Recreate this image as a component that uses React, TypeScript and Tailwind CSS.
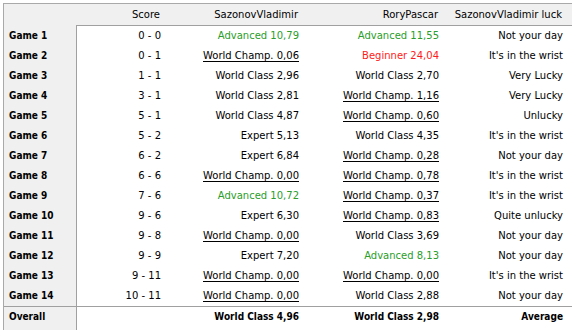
import React from "react";

// Match statistics grid — one row per game, an "Overall" footer.
type Cell = { text: string; tone?: "green" | "red" | "champ" | "plain" };
type GameRow = { label: string; score: string; a: Cell; b: Cell; luck: string };

const p = (text: string): Cell => ({ text, tone: "plain" });
const g = (text: string): Cell => ({ text, tone: "green" });
const r = (text: string): Cell => ({ text, tone: "red" });
const c = (text: string): Cell => ({ text, tone: "champ" });

const ROWS: GameRow[] = [
  { label: "Game 1", score: "0 - 0", a: g("Advanced 10,79"), b: g("Advanced 11,55"), luck: "Not your day" },
  { label: "Game 2", score: "0 - 1", a: c("World Champ. 0,06"), b: r("Beginner 24,04"), luck: "It's in the wrist" },
  { label: "Game 3", score: "1 - 1", a: p("World Class 2,96"), b: p("World Class 2,70"), luck: "Very Lucky" },
  { label: "Game 4", score: "3 - 1", a: p("World Class 2,81"), b: c("World Champ. 1,16"), luck: "Very Lucky" },
  { label: "Game 5", score: "5 - 1", a: p("World Class 4,87"), b: c("World Champ. 0,60"), luck: "Unlucky" },
  { label: "Game 6", score: "5 - 2", a: p("Expert 5,13"), b: p("World Class 4,35"), luck: "It's in the wrist" },
  { label: "Game 7", score: "6 - 2", a: p("Expert 6,84"), b: c("World Champ. 0,28"), luck: "Not your day" },
  { label: "Game 8", score: "6 - 6", a: c("World Champ. 0,00"), b: c("World Champ. 0,78"), luck: "It's in the wrist" },
  { label: "Game 9", score: "7 - 6", a: g("Advanced 10,72"), b: c("World Champ. 0,37"), luck: "It's in the wrist" },
  { label: "Game 10", score: "9 - 6", a: p("Expert 6,30"), b: c("World Champ. 0,83"), luck: "Quite unlucky" },
  { label: "Game 11", score: "9 - 8", a: c("World Champ. 0,00"), b: p("World Class 3,69"), luck: "Not your day" },
  { label: "Game 12", score: "9 - 9", a: p("Expert 7,20"), b: g("Advanced 8,13"), luck: "Not your day" },
  { label: "Game 13", score: "9 - 11", a: c("World Champ. 0,00"), b: c("World Champ. 0,00"), luck: "It's in the wrist" },
  { label: "Game 14", score: "10 - 11", a: c("World Champ. 0,00"), b: p("World Class 2,88"), luck: "Not your day" },
];

const BOLD = "font-['DejaVu_Sans_Condensed','DejaVu_Sans',sans-serif] font-bold [font-stretch:condensed]";

function Rating({ cell }: { cell: Cell }) {
  if (cell.tone === "green") return <span className="text-[#2a9d2a]">{cell.text}</span>;
  if (cell.tone === "red") return <span className="text-[#ff1a1a]">{cell.text}</span>;
  if (cell.tone === "champ") return <span className="underline underline-offset-[2px]">{cell.text}</span>;
  return <span>{cell.text}</span>;
}

function Cells({ score, a, b, luck }: { score: React.ReactNode; a: React.ReactNode; b: React.ReactNode; luck: React.ReactNode }) {
  return (
    <>
      <div className="w-[89px] pr-[5px] text-right whitespace-nowrap">{score}</div>
      <div className="w-[138px] pr-[5px] text-right whitespace-nowrap">{a}</div>
      <div className="w-[140px] pr-[5px] text-right whitespace-nowrap">{b}</div>
      <div className="w-[124px] pr-[5px] text-right whitespace-nowrap">{luck}</div>
    </>
  );
}

export default function App() {
  return (
    <div className="w-[572px] h-[330px] bg-white pt-[3px] pl-[3px] overflow-hidden text-[10px] text-black font-['DejaVu_Sans',sans-serif] leading-none">
      <div className="h-full border-t border-l border-[#a9a9a9] bg-[#f0f0f0]">
        {/* Header */}
        <div className="flex h-[22px]">
          <div className="w-[72px] shrink-0" />
          <div className="flex flex-1 items-center border-b border-[#a0a0a0]">
            <Cells score="Score" a="SazonovVladimir" b="RoryPascar" luck="SazonovVladimir luck" />
          </div>
        </div>

        {ROWS.map((row) => (
          <div key={row.label} className="flex h-[20px]">
            <div className={`w-[72px] shrink-0 pl-[5px] flex items-center ${BOLD}`}>{row.label}</div>
            <div className="flex flex-1 items-center bg-white border-l border-[#a0a0a0]">
              <Cells score={row.score} a={<Rating cell={row.a} />} b={<Rating cell={row.b} />} luck={row.luck} />
            </div>
          </div>
        ))}

        {/* Overall */}
        <div className="flex h-[30px] border-t border-[#a0a0a0]">
          <div className={`w-[72px] shrink-0 pl-[5px] pt-[5px] ${BOLD}`}>Overall</div>
          <div className={`flex flex-1 items-start pt-[5px] bg-white border-l border-[#a0a0a0] ${BOLD}`}>
            <Cells score="" a="World Class 4,96" b="World Class 2,98" luck="Average" />
          </div>
        </div>
      </div>
    </div>
  );
}
